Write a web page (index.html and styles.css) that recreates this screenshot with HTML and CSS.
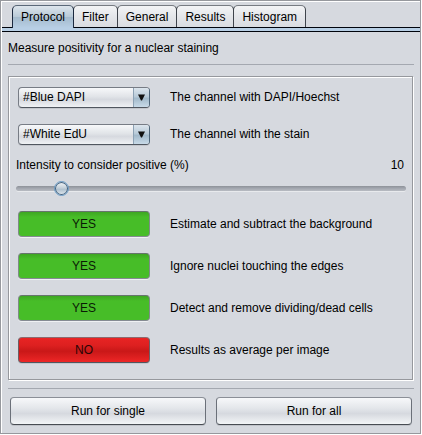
FILE: index.html
```
<!DOCTYPE html>
<html lang="en">
<head>
<meta charset="utf-8">
<title>Nuclear staining</title>
<link rel="stylesheet" href="styles.css">
</head>
<body>
<main class="window">
  <div class="tabs" role="tablist">
    <button class="tab tab-active" role="tab" aria-selected="true">Protocol</button>
    <button class="tab" role="tab" aria-selected="false">Filter</button>
    <button class="tab" role="tab" aria-selected="false">General</button>
    <button class="tab" role="tab" aria-selected="false">Results</button>
    <button class="tab" role="tab" aria-selected="false">Histogram</button>
  </div>
  <div class="tab-band"></div>
  <section class="page" role="tabpanel">
    <p class="description">Measure positivity for a nuclear staining</p>
    <div class="options">
      <div class="row row-select">
        <span class="combo">
          <select id="channel-nuclei"><option>#Blue DAPI</option><option>#White EdU</option></select>
          <svg class="combo-arrow" viewBox="0 0 16 19"><path d="M5 6.500h7L9 12.500H8z"/></svg>
        </span>
        <label for="channel-nuclei">The channel with DAPI/Hoechst</label>
      </div>
      <div class="row row-select">
        <span class="combo">
          <select id="channel-stain"><option>#White EdU</option><option>#Blue DAPI</option></select>
          <svg class="combo-arrow" viewBox="0 0 16 19"><path d="M5 6.500h7L9 12.500H8z"/></svg>
        </span>
        <label for="channel-stain">The channel with the stain</label>
      </div>
      <div class="intensity">
        <div class="intensity-head">
          <label for="intensity">Intensity to consider positive (%)</label>
          <output for="intensity">10</output>
        </div>
        <input class="slider" type="range" id="intensity" min="0" max="100" value="10">
      </div>
      <div class="row row-toggle">
        <button class="toggle toggle-yes" id="background" aria-pressed="true">YES</button>
        <label for="background">Estimate and subtract the background</label>
      </div>
      <div class="row row-toggle">
        <button class="toggle toggle-yes" id="edges" aria-pressed="true">YES</button>
        <label for="edges">Ignore nuclei touching the edges</label>
      </div>
      <div class="row row-toggle">
        <button class="toggle toggle-yes" id="dead-cells" aria-pressed="true">YES</button>
        <label for="dead-cells">Detect and remove dividing/dead cells</label>
      </div>
      <div class="row row-toggle">
        <button class="toggle toggle-no" id="average" aria-pressed="false">NO</button>
        <label for="average">Results as average per image</label>
      </div>
    </div>
    <div class="actions">
      <button class="run">Run for single</button>
      <button class="run">Run for all</button>
    </div>
  </section>
</main>
</body>
</html>
```
FILE: styles.css
```
* {
  box-sizing: border-box;
}

body {
  margin: 0;
  background: #fff;
  color: #000;
  font: 12px/16px "Liberation Sans", Arial, sans-serif;
}

button,
select {
  margin: 0;
  font: inherit;
  color: inherit;
}

/* Etched frame: a grey line with a white line to its lower right */
.window {
  margin-right: 1px;
  margin-bottom: 1px;
  border: 1px solid #96989d;
  background: #d6d9df;
  box-shadow: inset 1px 1px #fff, 1px 1px #fff;
}

.tabs {
  display: flex;
  padding: 4px 0 0 11px;
}

.tab {
  height: 22px;
  margin-right: -1px;
  padding: 0 8px;
  border: 1px solid #3f444c;
  border-top-color: #777b82;
  border-bottom: 0;
  border-radius: 5px 5px 0 0;
  background: linear-gradient(#f3f4f6, #e4e6ea 50%, #d9dce1);
}

.tab-active {
  z-index: 1;
  height: 23px;
  margin-bottom: -1px;
  border-color: #1c2a40;
  border-top-color: #5a6878;
  background: linear-gradient(#dde5ec, #b9cad8 48%, #a5bbcd 52%, #b8cfe5);
}

.tab-band {
  height: 5px;
  margin-left: 1px;
  border: solid #00040c;
  border-width: 1px 0;
  background: #b8cfe5;
}

.page {
  padding: 0 6px 8px 7px;
}

.description {
  margin: 0;
  padding: 8px 0;
  border-bottom: 1px solid #a4a8b0;
}

.options {
  margin: 11px 1px 8px 0;
  padding: 9px 6px 16px 7px;
  border: 1px solid #96989d;
  box-shadow: inset 1px 1px #fff, 1px 1px #fff;
}

.row {
  display: grid;
  grid-template-columns: 132px 1fr;
  column-gap: 20px;
  align-items: center;
  padding-left: 2px;
}

.row-select {
  height: 22px;
  margin-bottom: 15px;
}

.combo {
  display: grid;
  grid-template-columns: 1fr 16px;
  height: 21px;
  border: 1px solid #777c85;
  border-bottom-color: #50565f;
  border-right-color: #4d6478;
  border-radius: 4px;
  overflow: hidden;
  background: linear-gradient(#f7f8fa, #e1e4e8 45%, #d6d9df 60%, #eff1f4);
  box-shadow: 0 1px #c3c6cc;
}

.combo select {
  grid-area: 1 / 1 / 2 / 3;
  width: 100%;
  padding: 0 20px 0 4px;
  border: 0;
  background: transparent;
  appearance: none;
}

.combo-arrow {
  grid-area: 1 / 2;
  width: 16px;
  height: 100%;
  background: linear-gradient(#dce5ed, #b8cad8 45%, #a3bacb 55%, #c8dae8);
  box-shadow: inset 1px 0 #8da2b5;
  pointer-events: none;
}

.combo-arrow path {
  fill: #111;
}

.intensity {
  margin-top: -3px;
  margin-bottom: 15px;
}

.intensity-head {
  display: flex;
  justify-content: space-between;
  padding-right: 2px;
}

.slider {
  display: block;
  width: 100%;
  height: 15px;
  margin: 8px 0 0;
  background: transparent;
  appearance: none;
}

.slider::-webkit-slider-runnable-track {
  height: 5px;
  border-radius: 3px;
  background: linear-gradient(#8e9299, #a4a8b0 50%, #b8bbc2);
  box-shadow: 0 1px #e8eaed;
}

.slider::-webkit-slider-thumb {
  width: 15px;
  height: 15px;
  margin-top: -5px;
  border: 1px solid #6c9cc6;
  border-radius: 50%;
  background: linear-gradient(#f4f6f8, #c2ced8 48%, #afc0ce 55%, #e2eaf0);
  box-shadow: inset 0 0 0 1px #45617c;
  appearance: none;
}

.row-toggle {
  height: 26px;
  margin-bottom: 16px;
}

.row-toggle:last-child {
  margin-bottom: 0;
}

.toggle {
  height: 26px;
  padding: 0;
  border: 1px solid #6d7d70;
  border-radius: 4px;
}

.toggle-yes {
  border-color: #66756c #7f8a88 #858b92;
  background: linear-gradient(#3ea622, #47bd28 5px);
  box-shadow: 0 1px #eff1f3;
  color: #0a1a05;
}

.toggle-no {
  border-color: #8d6a6e #6b5f64 #50565f;
  background: linear-gradient(#e82424, #de2020 30%, #c91818 55%, #ed2626);
  box-shadow: 0 1px #c3c6cc;
  color: #2a0505;
}

.actions {
  display: grid;
  grid-template-columns: 1fr 1fr;
  column-gap: 10px;
  padding: 8px 2px 0;
  border-top: 1px solid #a4a8b0;
}

.run {
  height: 28px;
  padding: 0;
  border: 1px solid #777c85;
  border-color: #8b8f97 #6b7079 #484c53;
  border-radius: 4px;
  background: linear-gradient(#f7f8fa, #e3e6ea 40%, #d6d9df 60%, #f3f5f7);
  box-shadow: 0 1px #c0c3c9;
}
```
